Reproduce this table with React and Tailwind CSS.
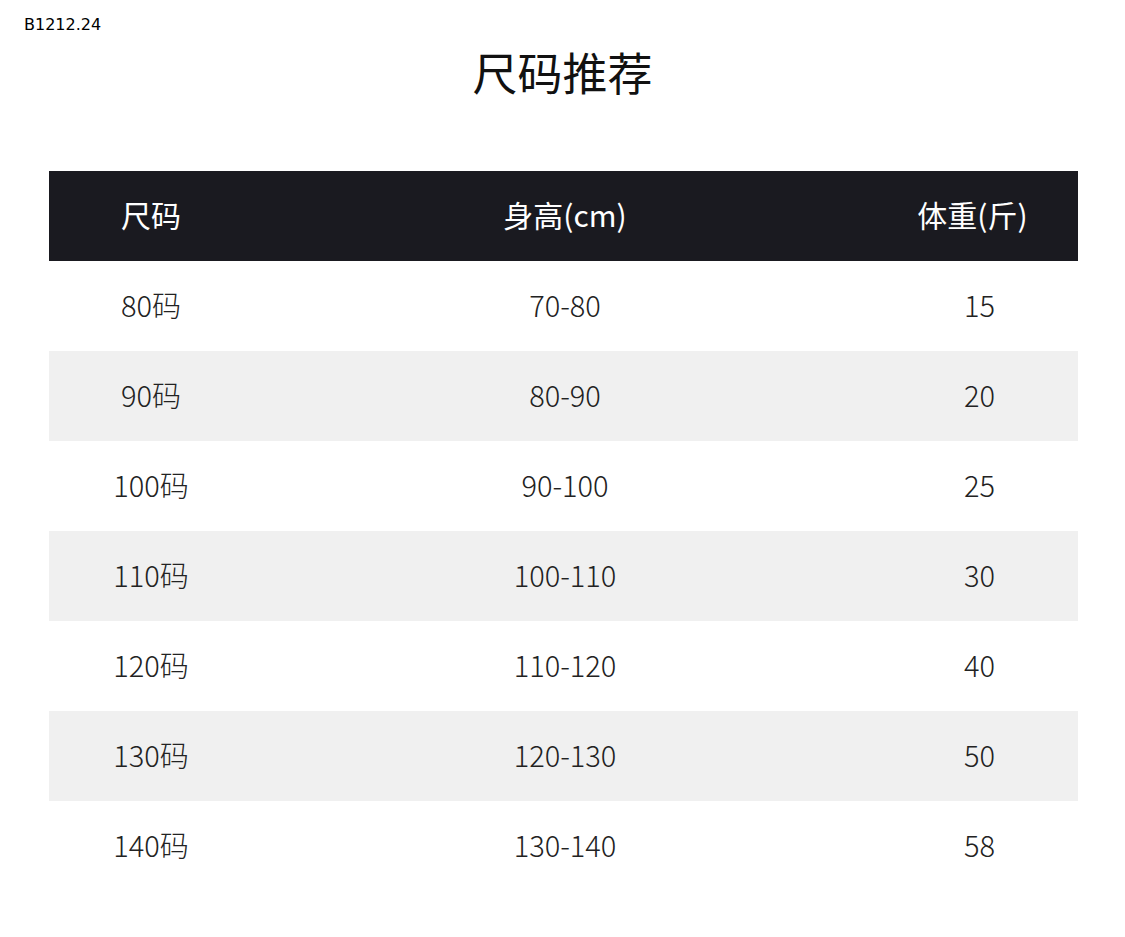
export default function App() {
  const rows = [
    ["80码", "70-80", "15"],
    ["90码", "80-90", "20"],
    ["100码", "90-100", "25"],
    ["110码", "100-110", "30"],
    ["120码", "110-120", "40"],
    ["130码", "120-130", "50"],
    ["140码", "130-140", "58"],
  ];
  const cjk = { fontFamily: '"Noto Sans CJK SC", "Noto Sans", sans-serif' };
  return (
    <div className="w-[1125px] h-[937px] bg-white overflow-hidden" style={cjk}>
      <div className="pt-[16px] pl-[24px] h-[34px]">
        <div className="text-[16px] leading-[18px] text-black" style={{ fontFamily: '"DejaVu Sans", sans-serif' }}>B1212.24</div>
      </div>
      <div className="h-[76px] flex items-center justify-center text-[45px] text-[#111] font-normal">尺码推荐</div>
      <div className="h-[61px]" />
      <div className="ml-[49px] w-[1029px]">
        <div className="grid grid-cols-[204px_624px_201px] h-[90px] bg-[#1a1a20] text-white text-[30px] items-center">
          <div className="text-center pb-[4px]">尺码</div>
          <div className="text-center pb-[4px]">身高(cm)</div>
          <div className="text-center pr-[10px] pb-[4px]">体重(斤)</div>
        </div>
        {rows.map((r, i) => (
          <div
            key={i}
            className={`grid grid-cols-[204px_624px_201px] h-[90px] text-[29px] text-[#222] items-center ${i % 2 === 1 ? "bg-[#f0f0f0]" : "bg-white"}`}
          >
            <div className="text-center font-light pb-[2px]">{r[0]}</div>
            <div className="text-center font-light pb-[2px]">{r[1]}</div>
            <div className="text-center pl-[4px] font-light pb-[2px]">{r[2]}</div>
          </div>
        ))}
      </div>
    </div>
  );
}
